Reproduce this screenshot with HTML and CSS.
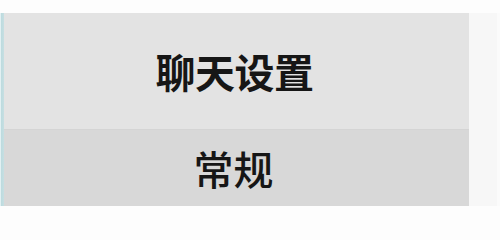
FILE: index.html
```html
<!DOCTYPE html>
<html lang="zh-CN">
<head>
<meta charset="utf-8">
<title>聊天设置</title>
<link rel="stylesheet" href="styles.css">
</head>
<body>
<div class="window">
  <div class="edge"></div>
  <div class="panel">
    <div class="header">聊天设置</div>
    <div class="tab">常规</div>
  </div>
  <div class="side"></div>
</div>
</body>
</html>
```

FILE: styles.css
```css
html, body {
  margin: 0;
  padding: 0;
  background: #fdfdfd;
}
body {
  width: 500px;
  height: 212px;
  overflow: hidden;
  font-family: "Noto Sans CJK SC", "Noto Sans", sans-serif;
  color: #161616;
}
.window {
  display: flex;
  height: 212px;
  padding-top: 13px;
  padding-bottom: 6px;
  box-sizing: border-box;
}
.edge {
  width: 4px;
  background: linear-gradient(to right, #e2f0f2 0, #e2f0f2 1px, #bcdade 1px, #c6dfe2 4px);
}
.panel {
  width: 465px;
  display: flex;
  flex-direction: column;
  background: linear-gradient(to right, #dcdcdc 0, #e6e6e6 6px, #e4e4e4 30px, #e3e3e3 100%);
}
.header {
  height: 116px;
  display: flex;
  align-items: center;
  justify-content: center;
  font-size: 40px;
  font-weight: 700;
  letter-spacing: -0.5px;
  padding-right: 4px;
  background: #e3e3e3;
}
.tab {
  flex: 1;
  display: flex;
  align-items: center;
  justify-content: center;
  font-size: 40px;
  font-weight: 500;
  padding-right: 6px;
  background: #d8d8d8;
  border-top: 1px solid #d4d4d4;
}
.side {
  flex: 1;
  background: #f7f7f7;
  border-right: 3px solid #fbfbfb;
}
```
